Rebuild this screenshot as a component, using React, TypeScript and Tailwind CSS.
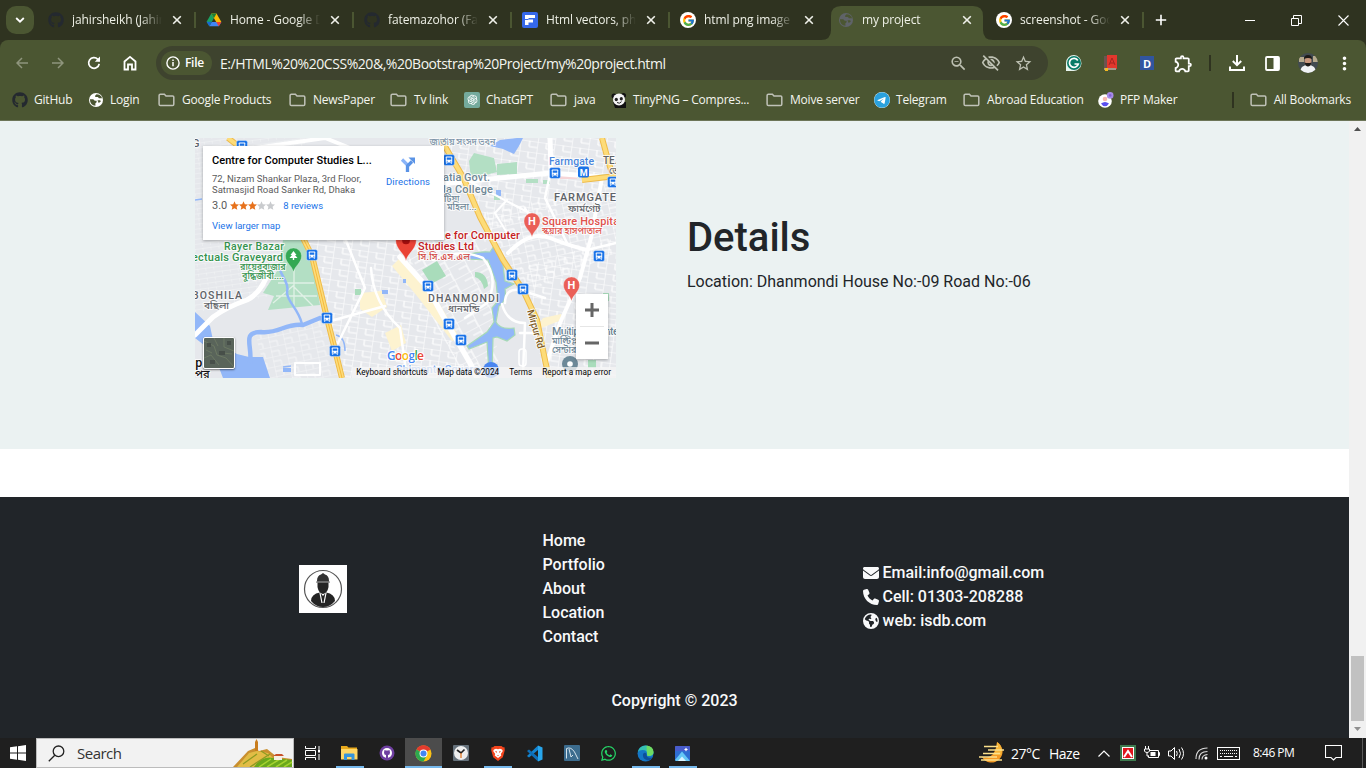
import React from "react";
import { FaGithub, FaEnvelope, FaPhone, FaEarthAmericas, FaTelegram, FaWhatsapp } from "react-icons/fa6";
import { FcGoogle } from "react-icons/fc";
import { AiOutlineOpenAI } from "react-icons/ai";
import { MdZoomOut, MdOutlineVisibilityOff, MdStarBorder, MdOutlineExtension, MdMoreVert } from "react-icons/md";

const UI = "font-['Open_Sans','Noto_Sans',sans-serif]";

/* ---------- small drawings ---------- */

const Close = () => (
  <svg width="10" height="10" viewBox="0 0 10 10" className="shrink-0">
    <path d="M1.2 1.2l7.6 7.6M8.8 1.2L1.2 8.8" stroke="#f0f1ea" strokeWidth="1.6" />
  </svg>
);

const Drive = () => (
  <svg width="16" height="16" viewBox="0 0 16 16">
    <path d="M5.3 1.5L8 6 3.3 14.2.6 9.8z" fill="#1aa260" />
    <path d="M5.3 1.5h5.2L15.4 10h-5.2z" fill="#fbbc04" />
    <path d="M5.3 1.5h5.2L8 6z" fill="#188038" />
    <path d="M3.3 14.2L5.8 9.9h9.6l-2.6 4.3z" fill="#4285f4" />
    <path d="M10.2 9.9h5.2l-2.6 4.3z" fill="#ea4335" />
    <path d="M.6 9.8h5.2l-2.5 4.4z" fill="#1967d2" />
  </svg>
);

const FIcon = () => (
  <svg width="16" height="16" viewBox="0 0 16 16">
    <rect width="16" height="16" rx="2" fill="#3568ea" />
    <path d="M3 3h10v3H6.5v1.5H11v3H6.5V13H3z" fill="#fff" />
    <path d="M3 7.5h3.500" stroke="#3568ea" />
  </svg>
);

const GoogleRound = () => (
  <div className="flex size-4 items-center justify-center rounded-full bg-white">
    <FcGoogle size={13} />
  </div>
);

const Globe = ({ color, bg }: { color: string; bg: string }) => (
  <svg width="16" height="16" viewBox="0 0 16 16">
    <circle cx="8" cy="8" r="7" fill={color} />
    <path d="M2 7.300h3.200l1.600 1.500h1.800v1.400l-1.200 1v2.600A6 6 0 0 1 2 8z" fill={bg} />
    <path d="M8.600 2.300l-1.400 1.200v1.400h2.700l1 1.400H14l-.6-1.700A6 6 0 0 0 8.600 2.300z" fill={bg} />
    <path d="M9.500 8.200h2.700l.6 1.400-2.100 1.500z" fill={bg} />
  </svg>
);

const Folder = () => (
  <svg width="17" height="14" viewBox="0 0 17 14">
    <path d="M2.400 1.200h4l1.600 1.700h6.600c.6 0 1.200.5 1.200 1.200v7.200c0 .7-.6 1.300-1.200 1.300H2.400c-.7 0-1.300-.6-1.300-1.300V2.500c0-.7.6-1.300 1.300-1.300z" fill="none" stroke="#c0c2b8" strokeWidth="1.5" />
  </svg>
);

const Panda = () => (
  <svg width="16" height="16" viewBox="0 0 16 16">
    <circle cx="3" cy="4" r="2.500" fill="#111" />
    <circle cx="12.500" cy="3.500" r="2.500" fill="#111" />
    <path d="M2 10h13v6H4z" fill="#111" />
    <ellipse cx="8" cy="7.500" rx="6" ry="6" fill="#f4f4f4" />
    <ellipse cx="5.300" cy="7.500" rx="1.600" ry="1.800" fill="#222" />
    <ellipse cx="10.300" cy="6.800" rx="1.600" ry="1.800" fill="#222" />
    <path d="M6 10.500q2.500 1.800 4.500-.8" stroke="#222" fill="none" />
  </svg>
);

const Pfp = () => (
  <svg width="16" height="16" viewBox="0 0 16 16">
    <circle cx="7" cy="9" r="6.800" fill="#fff" />
    <circle cx="7" cy="7" r="2.300" fill="#f7b7b0" />
    <path d="M3 11.500q4-3 8 0-1.500 2.700-4 2.700t-4-2.700z" fill="#5a4ff0" />
    <circle cx="12.200" cy="3.400" r="3.300" fill="#a78be8" />
    <circle cx="12.200" cy="3.400" r="1.300" fill="#8260d8" />
  </svg>
);

/* ---------- tabs ---------- */

type Tab = { icon: React.ReactNode; title: string; active?: boolean; sep?: boolean };
const tabs: Tab[] = [
  { icon: <FaGithub size={16} color="#24292f" />, title: "jahirsheikh (Jahir", sep: true },
  { icon: <Drive />, title: "Home - Google D", sep: true },
  { icon: <FaGithub size={16} color="#24292f" />, title: "fatemazohor (Fat", sep: true },
  { icon: <FIcon />, title: "Html vectors, pho", sep: true },
  { icon: <GoogleRound />, title: "html png image" },
  { icon: <Globe color="#5f6368" bg="#4b5632" />, title: "my project", active: true },
  { icon: <GoogleRound />, title: "screenshot - Goo", sep: true },
];

const TabStrip = () => (
  <div className="flex h-10 items-center bg-[#2f3320] pl-[6px]">
    <div className="mr-1 flex size-7 items-center justify-center rounded-[10px] bg-[#4b5632]">
      <svg width="10" height="6" viewBox="0 0 10 6"><path d="M1.200 1L5 4.700 8.800 1" fill="none" stroke="#fff" strokeWidth="1.800" /></svg>
    </div>
    {tabs.map((t, i) => (
      <div key={i} className="relative flex h-10 w-[158px] shrink-0 items-center pl-[10px]">
        {t.active && (
          <svg width="172" height="34" viewBox="0 0 172 34" className="absolute top-[6px] left-[-7px]">
            <path d="M0 34Q10 34 10 24V10Q10 0 20 0H152Q162 0 162 10V24Q162 34 172 34z" fill="#4b5632" />
          </svg>
        )}
        <div className="relative flex size-4 shrink-0 items-center justify-center">{t.icon}</div>
        <div className="relative ml-2 w-[90px] overflow-hidden text-[12px] tracking-[-0.1px] whitespace-nowrap text-[#eef0e6] [mask-image:linear-gradient(to_right,#000_76%,transparent)]">{t.title}</div>
        <div className="relative ml-[10px] flex"><Close /></div>
        {t.sep && <div className="ml-auto h-4 w-[2px] shrink-0 bg-[#4b5632]" />}
      </div>
    ))}
    <svg width="12" height="12" viewBox="0 0 12 12" className="ml-[11px]"><path d="M6 .8v10.400M.8 6h10.400" stroke="#fff" strokeWidth="1.600" /></svg>
    <div className="ml-auto flex items-center gap-9 pr-[17px]">
      <svg width="10" height="10"><path d="M0 5.500h10" stroke="#fff" /></svg>
      <svg width="11" height="11"><path d="M.5 3.500h7v7h-7zM2.500 3.500v-3h8v8h-3" stroke="#fff" fill="none" /></svg>
      <svg width="11" height="11"><path d="M.5 .5l10 10M10.500 .5l-10 10" stroke="#fff" strokeWidth="1.100" /></svg>
    </div>
  </div>
);

const Arrow = ({ flip }: { flip?: boolean }) => (
  <svg width="12" height="12" viewBox="0 0 12 12" className={flip ? "rotate-180" : ""}>
    <path d="M12 6H1M6 1L1 6l5 5" fill="none" stroke="#8f957d" strokeWidth="1.500" />
  </svg>
);

const Toolbar = () => (
  <div className="bg-[#2f3320]">
    <div className="flex h-[46px] items-center rounded-t-[8px] bg-[#4b5632]">
      <div className="ml-4 flex w-[140px] items-center">
        <Arrow />
        <div className="ml-[24px]"><Arrow flip /></div>
        <svg width="14" height="14" viewBox="0 0 14 14" className="ml-[23px]">
          <path d="M12.200 7.800A5.300 5.300 0 1 1 10.800 3.300L12.500 5" fill="none" stroke="#fff" strokeWidth="1.700" />
          <path d="M13 .6v5.200H7.800z" fill="#fff" />
        </svg>
        <svg width="14" height="16" viewBox="0 0 14 16" className="ml-[22px]">
          <path d="M1.500 14.500v-8L7 1.900l5.500 4.600v8H9v-5H5v5z" fill="none" stroke="#fff" strokeWidth="1.800" />
        </svg>
      </div>
      <div className="flex h-[34px] w-[892px] items-center rounded-full bg-[#3e432e] pr-[15px] pl-[5px]">
        <div className="flex h-6 w-[51px] items-center gap-[5px] rounded-full bg-[#4b5632] pl-[5px]">
          <svg width="14" height="14" viewBox="0 0 14 14" className="shrink-0"><circle cx="7" cy="7" r="6.100" fill="none" stroke="#fff" strokeWidth="1.400" /><path d="M7 6v4.300M7 3.500v1.500" stroke="#fff" strokeWidth="1.500" /></svg>
          <span className="text-[12px] font-semibold tracking-[-0.3px] text-white">File</span>
        </div>
        <span className="ml-2 text-[14px] tracking-[-0.45px] whitespace-nowrap text-[#f5f6f0]">E:/HTML%20%20CSS%20&amp;,%20Bootstrap%20Project/my%20project.html</span>
        <div className="ml-auto flex items-center gap-[13px] text-[#bdc0b2]">
          <MdZoomOut size={19} />
          <MdOutlineVisibilityOff size={20} />
          <MdStarBorder size={19} />
        </div>
      </div>
      <div className="ml-[17px] flex items-center">
        <svg width="18" height="18" viewBox="0 0 18 18"><path d="M9 1a8 8 0 1 1-1 16H1V9a8 8 0 0 1 8-8z" fill="#e8f5ef" /><circle cx="9" cy="9" r="7" fill="#087b67" /><path d="M12.800 6.500A4.500 4.500 0 1 0 13.300 10H9.500" fill="none" stroke="#fff" strokeWidth="1.700" /></svg>
        <svg width="15" height="18" viewBox="0 0 15 18" className="ml-5"><path d="M1 2h3v13H1z" fill="#6c5350" /><path d="M4 1h10v14H4z" fill="#e2372d" /><path d="M6 11l3-7 3 7M7 9h4" stroke="#a72420" fill="none" /><path d="M1 14h12v2H1z" fill="#a49689" /><path d="M2 14h3v3H2z" fill="#f5b921" /></svg>
        <div className="ml-[22px] flex size-[14px] items-center justify-center bg-[#31559f] text-[11px] leading-none font-bold text-white">D</div>
        <MdOutlineExtension size={21} color="#fff" className="ml-[19px]" />
        <div className="ml-[15px] h-4 w-[2px] bg-[#2f3320]" />
        <svg width="16" height="16" viewBox="0 0 16 16" className="ml-[18px]"><path d="M8 0v10M3.800 6L8 10.200 12.200 6" fill="none" stroke="#fff" strokeWidth="2" /><path d="M1 11.500V15h14v-3.500" fill="none" stroke="#fff" strokeWidth="2" /></svg>
        <svg width="15" height="15" viewBox="0 0 15 15" className="ml-5"><rect x="1" y="1" width="13" height="13" rx="1" fill="none" stroke="#fff" strokeWidth="1.800" /><path d="M8.500 1H14v13H8.500z" fill="#fff" /></svg>
        <svg width="20" height="20" viewBox="0 0 20 20" className="ml-[18px]">
          <clipPath id="av"><circle cx="10" cy="10" r="10" /></clipPath>
          <g clipPath="url(#av)"><rect width="20" height="20" fill="#424b51" /><path d="M1 4h5v5H1zM15 3h5v6h-5z" fill="#b5aa8e" /><path d="M2 20q0-8 8-8t8 8z" fill="#f1f3f5" /><ellipse cx="10" cy="8" rx="3.500" ry="4.500" fill="#c7967c" /><path d="M6 6q0-4 4-4t4 4q-4-2-8 0z" fill="#1d1a18" /><path d="M6.500 9.500q3.500 1 7 0-1 4-3.500 4t-3.500-4z" fill="#1d1a18" /></g>
        </svg>
        <MdMoreVert size={21} color="#fff" className="ml-[16px]" />
      </div>
    </div>
  </div>
);

const bookmarks: { icon: React.ReactNode; label: string; w: string; gap?: string }[] = [
  { icon: <FaGithub size={16} color="#24292f" />, label: "GitHub", w: "w-[76px]", gap: "ml-[6px]" },
  { icon: <Globe color="#fff" bg="#4b5632" />, label: "Login", w: "w-[70px]", gap: "ml-[6px]" },
  { icon: <Folder />, label: "Google Products", w: "w-[131px]" },
  { icon: <Folder />, label: "NewsPaper", w: "w-[101px]" },
  { icon: <Folder />, label: "Tv link", w: "w-[74px]" },
  { icon: <div className="flex size-4 items-center justify-center rounded-[2px] bg-[#74aa9c]"><AiOutlineOpenAI size={13} color="#fff" /></div>, label: "ChatGPT", w: "w-[86px]", gap: "ml-[6px]" },
  { icon: <Folder />, label: "java", w: "w-[61px]" },
  { icon: <Panda />, label: "TinyPNG – Compres...", w: "w-[155px]", gap: "ml-[6px]" },
  { icon: <Folder />, label: "Moive server", w: "w-[108px]" },
  { icon: <div className="flex size-4 items-center justify-center rounded-full bg-white"><FaTelegram size={16} color="#2aa1de" /></div>, label: "Telegram", w: "w-[89px]", gap: "ml-[6px]" },
  { icon: <Folder />, label: "Abroad Education", w: "w-[135px]" },
  { icon: <Pfp />, label: "PFP Maker", w: "w-[100px]", gap: "ml-[6px]" },
];

const Bookmarks = () => (
  <div className="flex h-[35px] items-center border-b border-[#6c7558] bg-[#4b5632] pb-[7px] pl-3 text-[12px] tracking-[-0.2px] whitespace-nowrap text-[#f4f5ef]">
    {bookmarks.map((b) => (
      <div key={b.label} className={`flex shrink-0 items-center ${b.w}`}>
        <div className="flex shrink-0">{b.icon}</div>
        <span className={b.gap ?? "ml-[7px]"}>{b.label}</span>
      </div>
    ))}
    <div className="ml-auto flex items-center pr-[15px]">
      <div className="mr-4 h-4 w-[2px] bg-[#2f3320]" />
      <Folder />
      <span className="ml-[7px]">All Bookmarks</span>
    </div>
  </div>
);

/* ---------- map ---------- */

const stops: [number, number][] = [
  [47, 8], [117, 117], [254, 22], [360, 35], [418, 44], [404, 118], [233, 148], [317, 137], [328, 151],
  [254, 186], [266, 202], [132, 180], [140, 213],
];

const Bus = ({ x, y }: { x: number; y: number }) => (
  <g transform={`translate(${x - 5.500} ${y - 5.500})`}>
    <rect width="11" height="11" rx="1.800" fill="#1a73e8" stroke="#fff" strokeOpacity=".6" strokeWidth=".6" />
    <path d="M3 2h5q.7 0 .7.700v5.300H2.300V2.700Q2.300 2 3 2z" fill="#fff" />
    <path d="M3.200 3h4.600v2.300H3.200zM3.200 6.300h1v1h-1zM6.800 6.300h1v1h-1z" fill="#1a73e8" />
    <path d="M3.200 8v1.300M7.800 8v1.300" stroke="#fff" />
  </g>
);

const Pin = ({ x, y, s, fill, children }: { x: number; y: number; s: number; fill: string; children?: React.ReactNode }) => (
  <g transform={`translate(${x} ${y}) scale(${s})`}>
    <path d="M0 0C-1-6-8-9-8-16A8 8 0 0 1 8-16C8-9 1-6 0 0z" fill={fill} stroke="#fff" strokeOpacity=".5" strokeWidth=".5" />
    {children}
  </g>
);

const Halo = ({ x, y, size, fill, children, w, ls, weight = 500 }: { x: number; y: number; size: number; fill: string; children: string; w?: number; ls?: number; weight?: number }) => (
  <text x={x} y={y} fontSize={size} fill={fill} fontWeight={weight} letterSpacing={ls} textLength={w} stroke="#fff" strokeWidth="2" strokeOpacity=".8" paintOrder="stroke" strokeLinejoin="round">{children}</text>
);

const MapArt = () => (
  <svg width="421" height="240" viewBox="0 0 421 240" className="block font-[Roboto,'Noto_Sans_Bengali',sans-serif]">
    <defs>
      <pattern id="g1" width="15" height="10" patternUnits="userSpaceOnUse" patternTransform="rotate(-12)">
        <path d="M0 0H15M0 0V10M8 5V10M0 5H8" stroke="#fff" strokeWidth="1" fill="none" />
      </pattern>
      <pattern id="g2" width="17" height="11" patternUnits="userSpaceOnUse" patternTransform="rotate(8)">
        <path d="M0 0H17M0 0V11M9 0V6M9 6H17" stroke="#fff" strokeWidth="1.200" fill="none" />
      </pattern>
      <pattern id="g3" width="18" height="13" patternUnits="userSpaceOnUse" patternTransform="rotate(-28)">
        <path d="M0 0H18M0 0V13M9 6H18V13" stroke="#fff" strokeWidth="1.200" fill="none" />
      </pattern>
      <pattern id="g4" width="8" height="5" patternUnits="userSpaceOnUse" patternTransform="rotate(-8)">
        <path d="M0 0H8M0 0V3" stroke="#f6f7f8" strokeWidth=".8" fill="none" />
      </pattern>
    </defs>
    <rect width="421" height="240" fill="#e6e8ec" />
    <path d="M0 0H110L112 150 0 175z" fill="url(#g4)" />
    <path d="M60 195L128 182 146 240H72z" fill="url(#g1)" opacity=".6" />
    <path d="M108 90L205 100 275 240H148z" fill="url(#g2)" />
    <path d="M200 90L290 95 305 240H270L205 119z" fill="url(#g3)" />
    <path d="M245 0H421V45L290 95z" fill="url(#g2)" />
    <path d="M285 75L421 45V115L330 155z" fill="url(#g1)" />
    <path d="M325 130L421 100V240H350z" fill="url(#g2)" />

    <path d="M165 155l22-2 5 16-15 10-12-8zM190 195l16-8 5 18-14 8zM205 120l30 30 30 50-8 3-35-45-25-30z" fill="#fdf3d0" />
    <path d="M348 180l18-4 3 5-30 12z" fill="#fdf3d0" />
    <path d="M88 102H107L117 120 125 167 73 172 79 158 68 155 84 130z" fill="#b3dfc4" />
    <path d="M83 145H119M81 158H122M99 125V168M78 165L98 148 118 168" stroke="#e0f1e6" strokeWidth="1.300" fill="none" />
    <path d="M279 15l20 5 3 14-26 7-2-18zM302 26l20-2v12l-20 1zM331 41h12v4h-12zM348 42h7v4h-7zM299 57h6v5h-6zM380 36h32v4h-34z" fill="#b3dfc4" />
    <path d="M365 37h17v4h-17z" fill="#f6d5d7" />
    <path d="M227 132l15-9 9 15-15 8zM280 134q12 0 13 14l-4 3q-2-10-9-12zM160 151h6v6h-6zM408 155h6v8h-6zM393 222h8v8h-8z" fill="#a9dcbb" />

    <path d="M0 174l15 14 3 14 24 14 12 3 14 0 7 21H28L18 214 0 200z" fill="#92b7f8" />
    <path d="M55 225C58 208 46 194 66 194 84 196 90 185 108 187L125 180 132 181" fill="none" stroke="#92b7f8" strokeWidth="4.500" />
    <path d="M107 186C103 170 93 165 92 155 94 146 89 142 85 132" fill="none" stroke="#92b7f8" strokeWidth="2.500" />
    <path d="M0 62l7-1M141 197q9 2 9 16M88 229l8-1" fill="none" stroke="#92b7f8" strokeWidth="1.500" />
    <path d="M88 230h8v4h-8zM301 52h5v6h-5zM187 152h6v4h-6zM208 141h3v4h-3z" fill="#92b7f8" />
    <path d="M270 118q12-5 25-4l4-6q8 2 8 12l3 23 9 3-9 5q2 12-6 17l-3 16q4 8 18 6l1 7-8 6-10-4-4 1-1 36-3-2-2-30-18 7-2-3 20-14 7-10-2-14 6-7-2-19-8-22-23-1z" fill="#92b7f8" stroke="#a6d9b6" strokeWidth="1.200" />
    <path d="M295 8l10-6 17-2 6 0-4 8-5 8-11-5z" fill="#92b7f8" />

    <g fill="none" stroke="#fff" strokeLinecap="round" strokeLinejoin="round">
      <path d="M0 197L18 179Q32 169 52 162 68 154 75 129" strokeWidth="5" />
      <path d="M60 10L130 0M130 0l50 20" strokeWidth="4" />
      <path d="M205 119L232 149 252 185 275 225 282 240" strokeWidth="5.500" />
      <path d="M246 46L355 35 421 40M355 0L356 35" strokeWidth="5" />
      <path d="M313 115Q335 92 355 100T392 112" strokeWidth="4" />
      <path d="M407 40L396 100 385 140 365 185 352 224" strokeWidth="4" />
      <path d="M392 112L421 105M355 36L350 60 372 105M132 184L190 168M143 205L170 150 150 100M176 130Q178 165 205 190L212 240" strokeWidth="2.500" />
      <path d="M238 122Q265 110 288 120 305 140 292 165L270 180M310 165Q310 150 325 152L350 160M307 166Q312 185 330 185L328 235M325 195H345" strokeWidth="2.500" />
      <path d="M312 62L300 75 312 95M268 40L340 78M330 70L342 90" strokeWidth="2" />
      <path d="M100 225h25v12h-25z" strokeWidth="2" />
      <rect x="324" y="211" width="7" height="17" rx="3" strokeWidth="1.500" />
    </g>
    <g fill="none" strokeLinejoin="round">
      <path d="M33 0L47 11M108 100L117 118 132 180 140 212 147 240M245 0L268 39 285 79 308 122 328 152 342 182 350 222 354 240M407 0L413 22 418 39 421 47M387 42L421 38" stroke="#eebb4b" strokeWidth="6" />
      <path d="M33 0L47 11M108 100L117 118 132 180 140 212 147 240M245 0L268 39 285 79 308 122 328 152 342 182 350 222 354 240M407 0L413 22 418 39 421 47M387 42L421 38" stroke="#fddc79" strokeWidth="4" />
      <path d="M108 100L117 118 132 180 140 212 147 240" stroke="#f5b83d" strokeWidth="1" />
    </g>

    {stops.map(([x, y]) => <Bus key={`${x}-${y}`} x={x} y={y} />)}
    <rect x="383" y="28.500" width="11" height="11" rx="1.800" fill="#1a73e8" />
    <text x="384.800" y="37.500" fontSize="9" fontWeight="700" fill="#fff">M</text>

    <Halo x={-3} y={9} size={11} fill="#5f6368">G</Halo>
    <Halo x={234} y={7} size={9.500} fill="#7d95a8" w={66}>জাতীয় সংসদ ভবন</Halo>
    <Halo x={354} y={27} size={10.500} fill="#4a86dc" w={45}>Farmgate</Halo>
    <Halo x={408} y={26} size={10} fill="#5f6368">TE.</Halo>
    <Halo x={414} y={36} size={9} fill="#5f6368">তে</Halo>
    <Halo x={248} y={43} size={11} fill="#6f8796" w={47}>atia Govt.</Halo>
    <Halo x={248} y={55} size={11} fill="#6f8796" w={50}>la College</Halo>
    <Halo x={249} y={64} size={9} fill="#6f8796">টিয়া</Halo>
    <Halo x={252} y={72} size={9} fill="#6f8796">মহিলা...</Halo>
    <Halo x={359} y={63} size={11} fill="#5f6368" w={62}>FARMGATE</Halo>
    <Halo x={373} y={74} size={10} fill="#5f6368">ফার্মগেট</Halo>
    <Halo x={347} y={87} size={11} fill="#e0524c" w={80}>Square Hospital</Halo>
    <Halo x={347} y={96} size={9} fill="#e0524c">স্কয়ার হাসপাতাল</Halo>
    <Halo x={250} y={101} size={11} fill="#c5221f" w={75}>e for Computer</Halo>
    <Halo x={223} y={112} size={11} fill="#c5221f" w={56}>Studies Ltd</Halo>
    <Halo x={223} y={122} size={9} fill="#d34a47" w={52}>সি.সি.এস.এল</Halo>
    <Halo x={29} y={112} size={10.500} fill="#34934e" w={60}>Rayer Bazar</Halo>
    <Halo x={-3} y={123} size={11} fill="#34934e" w={91}>ectuals Graveyard</Halo>
    <Halo x={45} y={132} size={9} fill="#34934e">রায়েরবাজার</Halo>
    <Halo x={47} y={141} size={9} fill="#34934e">বুদ্ধিজীবী....</Halo>
    <Halo x={-3} y={161} size={10.500} fill="#5f6368" w={50}>BOSHILA</Halo>
    <Halo x={9} y={171} size={10} fill="#5f6368">বছিলা</Halo>
    <Halo x={233} y={164} size={10.500} fill="#5f6368" w={71}>DHANMONDI</Halo>
    <Halo x={253} y={174} size={10} fill="#5f6368">ধানমন্ডি</Halo>
    <g transform="rotate(74 335 172)"><Halo x={335} y={175} size={10} fill="#7c5a24" w={40}>Mirpur Rd</Halo></g>
    <Halo x={357} y={197} size={11} fill="#6a8494" w={70}>Multiplan Center</Halo>
    <Halo x={357} y={206} size={9} fill="#6a8494">মাল্টিপ্লান</Halo>
    <Halo x={357} y={215} size={9} fill="#6a8494">সেন্টার</Halo>
    <Halo x={201} y={235} size={11} fill="#7ea9ee" w={83}>Shimanto Square</Halo>
    <Halo x={-3} y={229} size={12.500} fill="#111">ıp</Halo>
    <Halo x={0} y={240} size={11} fill="#111">পর</Halo>

    <Pin x={98.500} y={134} s={1} fill="#34a853"><path d="M0-21l3 4H1.500l2.500 3H-4l2.500-3H-3zM-.700-14h1.400v2H-.7z" fill="#fff" /></Pin>
    <Pin x={337} y={99} s={1} fill="#ea5f57"><text x="-4" y="-12" fontSize="11" fontWeight="700" fill="#fff">H</text></Pin>
    <Pin x={376.500} y={163} s={1} fill="#ea5f57"><text x="-4" y="-12" fontSize="11" fontWeight="700" fill="#fff">H</text></Pin>
    <Pin x={211} y={123} s={1.280} fill="#ea4335"><circle cy="-16" r="3" fill="#a50e0e" /></Pin>
    <circle cx="375" cy="226" r="8" fill="#6d8998" /><circle cx="375" cy="226" r="2.800" fill="#fff" />
    <circle cx="296" cy="232" r="8" fill="#4a86f0" />
  </svg>
);

const Star = ({ on }: { on: boolean }) => (
  <svg width="9" height="9" viewBox="0 0 24 24"><path d="M12 .5l3.500 8 8.500.8-6.500 5.700 2 8.500L12 19l-7.500 4.500 2-8.500L0 9.300l8.500-.8z" fill={on ? "#e7711b" : "#c9cbce"} /></svg>
);

const GoogleMap = () => (
  <div className="relative h-[240px] w-[421px] overflow-hidden font-[Roboto,sans-serif]">
    <MapArt />
    <div className="absolute top-2 left-2 flex h-[94px] w-[241px] bg-white pl-[9px] shadow-[0_1px_3px_rgba(0,0,0,0.3)]">
      <div className="w-[172px] shrink-0 whitespace-nowrap">
        <div className="mt-[8px] text-[11px] leading-[14px] font-medium tracking-[0.05px] text-black">Centre for Computer Studies L...</div>
        <div className="mt-[5px] text-[9.500px] leading-[11px] tracking-[0.03px] text-[#5b5b5b]">72, Nizam Shankar Plaza, 3rd Floor,<br />Satmasjid Road Sanker Rd, Dhaka</div>
        <div className="mt-[4px] flex items-center leading-[13px]">
          <span className="mr-[3px] text-[11px] text-[#5b5b5b]">3.0</span>
          {[1, 2, 3, 4, 5].map((n) => <Star key={n} on={n <= 3} />)}
          <span className="ml-2 text-[9.500px] text-[#1a73e8]">8 reviews</span>
        </div>
        <div className="mt-[8px] text-[9.500px] leading-[12px] text-[#1a73e8]">View larger map</div>
      </div>
      <div className="flex w-[48px] flex-col items-center">
        <svg width="16" height="17" viewBox="0 0 16 17" className="mt-[10px]">
          <path d="M2 3.500l5.500 5.500M7.500 16V9.500" stroke="#8ab4f8" strokeWidth="3.200" fill="none" />
          <path d="M7.500 16V10L12 5.500" stroke="#5a93e6" strokeWidth="3.200" fill="none" /><path d="M8.500 1.500H15V8z" fill="#5a93e6" />
        </svg>
        <span className="mt-[2px] text-[9.500px] leading-[14px] tracking-[0.15px] text-[#1a73e8]">Directions</span>
      </div>
    </div>
    <div className="absolute top-[156px] left-[381px] flex h-[65px] w-8 flex-col items-center bg-white shadow-[0_1px_3px_rgba(0,0,0,0.3)]">
      <svg width="14" height="65" viewBox="0 0 14 65"><path d="M0 16h14M7 9v14M0 49h14" stroke="#666" strokeWidth="3" /></svg>
      <div className="absolute top-8 left-1 h-px w-6 bg-[#e6e6e6]" />
    </div>
    <div className="absolute top-[199px] left-2 size-8 rounded-[2px] border border-white bg-[#59645a] shadow-[0_1px_2px_rgba(0,0,0,0.5)]">
      <svg width="30" height="30"><path d="M0 3l10 5 3 9 9 3 8 9M20 0v9l10 4M0 20l7-3 8 10M10 0l4 8M2 12l6 3M19 15l9 1" stroke="#748066" fill="none" opacity=".7" /><path d="M3 5h4v4H3zM15 13h6v4h-6zM6 22h5v4H6zM23 3h4v4h-4z" fill="#474f49" /></svg>
    </div>
    <svg width="40" height="17" viewBox="0 0 40 17" className="absolute top-[209px] left-[191px] font-['Open_Sans',sans-serif]">
      <text x="1" y="13" fontSize="12" fontWeight="600" stroke="#fff" strokeWidth="2" paintOrder="stroke" textLength="37"><tspan fill="#4285f4">G</tspan><tspan fill="#ea4335">o</tspan><tspan fill="#fbbc04">o</tspan><tspan fill="#4285f4">g</tspan><tspan fill="#34a853">l</tspan><tspan fill="#ea4335">e</tspan></text>
    </svg>
    <div className="absolute right-0 bottom-0 flex h-[11px] items-center gap-[10px] bg-[#f5f5f5]/75 pr-[5px] pl-[4px] text-[8.200px] leading-[11px] tracking-[0.02px] whitespace-nowrap text-black">
      <span>Keyboard shortcuts</span><span>Map data ©2024</span><span>Terms</span><span>Report a map error</span>
    </div>
  </div>
);

/* ---------- page ---------- */

const Footer = () => (
  <footer className="flex h-[241px] flex-col bg-[#212529] font-[Roboto,sans-serif] text-[16px] leading-6 font-medium text-[#f8f9fa]">
    <div className="flex h-[168px] items-center pt-[15px] pl-[299px]">
      <svg width="48" height="48" viewBox="0 0 48 48" className="shrink-0">
        <rect width="48" height="48" fill="#fff" />
        <circle cx="24" cy="24" r="18.500" fill="none" stroke="#555" strokeWidth="1.200" />
        <path d="M12 36Q12 29 21 27.500L24 31l3-3.500Q36 29 36 36 31 42 24 42T12 36z" fill="#242424" />
        <path d="M18.500 16h11v6q-1 6-5.500 7-4.500-1-5.500-7z" fill="#242424" />
        <path d="M18 16q0-5.500 4-6.500L24 8l2 1.500q4 1 4 6.500l1 1.500H17z" fill="#333" />
        <path d="M18 17h12" stroke="#aaa" /><path d="M21 28l2 10M27 28l-2 10" stroke="#fff" strokeWidth="1.200" />
      </svg>
      <div className="ml-[195.500px] w-[320px] shrink-0 tracking-[-0.02px]">
        {["Home", "Portfolio", "About", "Location", "Contact"].map((l) => <div key={l}>{l}</div>)}
      </div>
      <div className="mt-4">
        <div className="flex items-center gap-1"><FaEnvelope size={16} />Email:info@gmail.com</div>
        <div className="flex items-center gap-1"><FaPhone size={16} />Cell: 01303-208288</div>
        <div className="flex items-center gap-1"><FaEarthAmericas size={16} />web: isdb.com</div>
      </div>
    </div>
    <div className="mt-6 text-center">Copyright © 2023</div>
  </footer>
);

const Page = () => (
  <div className="flex h-[617px]">
    <main className="w-[1349px]">
      <section className="flex h-[328px] bg-[#ebf2f2] pt-[17px] pl-[195px]">
        <GoogleMap />
        <div className="ml-[71px] pt-[76px] font-[Roboto,sans-serif] text-[#212529]">
          <h1 className="text-[40px] leading-[48px] font-medium">Details</h1>
          <p className="mt-2 text-[16px] leading-6">Location: Dhanmondi House No:-09 Road No:-06</p>
        </div>
      </section>
      <div className="h-12 bg-white" />
      <Footer />
    </main>
    <div className="flex w-[17px] flex-col items-center bg-[#f1f1f1] py-[6px]">
      <svg width="7" height="4"><path d="M0 4L3.500 0 7 4z" fill="#505050" /></svg>
      <div className="mt-[525px] h-[65px] w-[13px] bg-[#c1c1c1]" />
      <svg width="7" height="4" className="mt-[6px]"><path d="M0 0L3.500 4 7 0z" fill="#909090" /></svg>
    </div>
  </div>
);

/* ---------- taskbar ---------- */

const apps: { name: string; icon: React.ReactNode; open?: boolean; focus?: boolean }[] = [
  { name: "taskview", icon: <svg width="16" height="16" viewBox="0 0 16 16"><path d="M.5 1v2.500h10V1M.5 15v-2.500h10V15M.5 5.500h10v5H.5zM14 1v3M14 9v6" fill="none" stroke="#fff" /><path d="M13 4.500h2v3h-2z" fill="#fff" /></svg> },
  { name: "explorer", open: true, icon: <svg width="17" height="15" viewBox="0 0 17 15"><path d="M0 0h6l1.500 1.500H16V13H0z" fill="#e8a91c" /><path d="M0 3h16.500v10.500H0z" fill="#ffd766" /><path d="M3 14V8.500Q3 7.500 4 7.500h8.500q1 0 1 1V14h-3v-3H6v3z" fill="#3695db" /></svg> },
  { name: "github", icon: <svg width="16" height="16" viewBox="0 0 16 16"><circle cx="8" cy="8" r="7.500" fill="#6e3fa0" /><circle cx="8" cy="8" r="5" fill="#fff" /><path d="M5.500 5l1.500.600h2L10.500 5l.5 2.500q0 2.500-2 2.500v3H7v-3q-2 0-2-2.500z" fill="#6e3fa0" /></svg> },
  { name: "chrome", open: true, focus: true, icon: <svg width="17" height="17" viewBox="0 0 18 18"><circle cx="9" cy="9" r="8.500" fill="#fbc116" /><path d="M9 9L1.600 4.700A8.500 8.500 0 0 1 16.400 4.700z" fill="#e33b2e" /><path d="M9 9L1.600 4.700A8.500 8.500 0 0 0 9 17.500L12.500 11z" fill="#2da94f" /><circle cx="9" cy="9" r="4.200" fill="#fff" /><circle cx="9" cy="9" r="3.200" fill="#4285f4" /></svg> },
  { name: "clock", icon: <svg width="16" height="16" viewBox="0 0 16 16"><rect width="16" height="16" rx="1" fill="#65717b" /><circle cx="8" cy="8" r="7" fill="#eee" /><path d="M4 5l4 3 3.500-3.500" stroke="#222" strokeWidth="1.700" fill="none" /><path d="M8 8v5" stroke="#e37a28" strokeWidth="1.300" /></svg> },
  { name: "brave", open: true, icon: <svg width="14" height="17" viewBox="0 0 14 17"><path d="M3.500 1h7l1.500 1.300 1.500-.1.300 3-2 7L7 16l-4.800-3.800-2-7 .3-3L2 2.300z" fill="#f2441d" /><path d="M3 4.500l2-.700L7 4.200l2-.400 2 .700.800 1.500-2 3 .5 1.500L7 13l-3.300-2.500.5-1.500-2-3z" fill="#fff" /><path d="M4 6l2 .5L5.500 8zM10 6l-2 .500.500 1.500zM6 10h2l-1 1z" fill="#f2441d" /></svg> },
  { name: "vscode", icon: <svg width="17" height="17" viewBox="0 0 17 17"><path d="M12 .5l4.500 2v12l-4.500 2z" fill="#28a6ec" /><path d="M12 .5V5L3 12.500 1 11z" fill="#1384d0" /><path d="M12 16.500V12L3 4.500 1 6z" fill="#0e6fb8" /></svg> },
  { name: "mysql", icon: <svg width="16" height="16" viewBox="0 0 16 16"><rect width="16" height="16" rx="1" fill="#3c6c8e" /><path d="M2.500 13.500V3.500Q7 1.500 10.500 7L14 14M5 4l1 4 1 4 2-2" fill="none" stroke="#d5e3ec" /></svg> },
  { name: "whatsapp", icon: <FaWhatsapp size={17} color="#25d366" /> },
  { name: "edge", open: true, icon: <svg width="17" height="17" viewBox="0 0 17 17"><circle cx="8.500" cy="8.500" r="8" fill="#1476c6" /><path d="M.8 7Q2.500 .5 8.500.5t8 6.500q0 4-5 4-2 0-1.500-2 .5-4-4.500-4Q2 5 .8 7z" fill="#35c1b1" /><path d="M9.500 .600q7 .900 7 6.400 0 4-5 4-2 0-1.500-2z" fill="#6fdc63" /><path d="M6 9q-1 5 5 6.500 3-.5 4.500-3-6 1.500-6-3.500Q8 6.500 6 9z" fill="#0d4f9c" /></svg> },
  { name: "photos", open: true, icon: <svg width="15" height="15" viewBox="0 0 15 15"><rect width="15" height="15" rx="1.200" fill="#2f6dd2" /><path d="M0 0h15v5H0z" fill="#5a52c6" opacity=".6" /><path d="M0 14L7 5.500 15 15H1z" fill="#65c7f6" /><path d="M3 15l4-4.500 4 4.500z" fill="#d9f3ff" /><path d="M11 1.500l.7 1.300 1.300.7-1.300.7-.7 1.300-.7-1.300L9 3.500l1.300-.7z" fill="#fff" /></svg> },
];

const Hill = () => (
  <svg width="60" height="28" viewBox="0 0 60 28">
    <path d="M0 28L15 12l7-3 4 3 8-2 10 8 15 2v8z" fill="#c98f2f" />
    <path d="M4 28L16 14l8-2 11 2 6 6-8 8z" fill="#e2bc45" />
    <path d="M21 28q8-12 20-9l18 2v7z" fill="#6aa81c" />
    <path d="M17 28l20-13M10 25l14-10M28 12l8 5" stroke="#8d9b22" strokeWidth="1.300" />
    <path d="M26 28l12-8M34 28l13-8M43 28l11-7M51 28l8-5" stroke="#a4d32f" strokeWidth="1.500" />
    <path d="M22 12V3l1.500-3L25 3v9z" fill="#c97d1e" />
    <path d="M41 17h8v4h-8z" fill="#f4efe2" /><path d="M40 17l3-2h6l2 2z" fill="#c8512a" />
  </svg>
);

const Taskbar = () => (
  <div className="flex h-[30px] items-center bg-[#1f1f1f] text-white">
    <div className="flex w-9 justify-center">
      <svg width="16" height="16" viewBox="0 0 16 16"><path d="M0 2.300L7 1.300V7.600H0zM8 1.200L16 0v7.600H8zM0 8.500h7v6.200l-7-1zM8 8.500h8V16l-8-1.200z" fill="#fff" /></svg>
    </div>
    <div className="flex h-[30px] w-[258px] items-center border border-[#bcbcbc] bg-[#f2f2f2] pl-[11px] text-[#333]">
      <svg width="17" height="17" viewBox="0 0 17 17"><circle cx="10.500" cy="6.300" r="5.300" fill="none" stroke="#222" strokeWidth="1.300" /><path d="M6.800 10.200L.8 16.300" stroke="#222" strokeWidth="1.300" /></svg>
      <span className="ml-3 text-[15px] tracking-[-0.5px]">Search</span>
      <div className="ml-auto"><Hill /></div>
    </div>
    {apps.map((a) => (
      <div key={a.name} className={`flex h-[30px] w-[37px] flex-col items-center ${a.focus ? "bg-[#4c4c4c]" : ""}`}>
        <div className="flex h-7 items-center pt-[2px]">{a.icon}</div>
        {a.open && <div className={`h-[2px] bg-[#76b9ed] ${a.focus ? "w-full" : "w-7"}`} />}
      </div>
    ))}
    <div className="ml-auto flex items-center">
      <svg width="25" height="24" viewBox="0 0 25 24"><path d="M18 1a11 11 0 1 1-15 15q13 3 15-15z" fill="#f49a24" /><path d="M18 1a11 11 0 0 1 4 13l-8 0q4-5 4-13z" fill="#f7b63a" /><path d="M5 5.500h14M9 9h16M4 12.500h17M0 16h18M2 19h21" stroke="#fbe08a" strokeWidth="1.600" /></svg>
      <span className="ml-[7px] w-[38px] text-[14px] tracking-[-0.5px]">27°C</span>
      <span className="w-[49px] text-[14px] tracking-[-0.5px]">Haze</span>
      <svg width="12" height="7" viewBox="0 0 12 7"><path d="M.5 6.500L6 1l5.500 5.500" stroke="#fff" fill="none" strokeWidth="1.200" /></svg>
      <svg width="16" height="16" viewBox="0 0 16 16" className="ml-[10px]"><rect width="16" height="16" fill="#3d7a4e" /><rect x="2" y="2" width="12" height="12" fill="#fff" /><rect x="3" y="3" width="10" height="10" fill="#e0161d" /><path d="M4 12l4-6 4 6" stroke="#fff" strokeWidth="2" fill="none" /></svg>
      <svg width="16" height="14" viewBox="0 0 16 14" className="ml-2"><path d="M5 4.500h9.500v7H4.500v-2M14.500 6.500h1v3h-1M1.500 0v3M4.500 0v3M.5 3h5v2q-.5 1.500-2.500 1.500T.5 5zM3 6.500V10h1.500" stroke="#fff" fill="none" /><path d="M6.500 6h5v4h-5z" fill="#fff" /></svg>
      <svg width="17" height="15" viewBox="0 0 17 15" className="ml-2"><path d="M.5 5v5h2.500l3.500 3.500v-12L3 5zM8.500 5q1.500 2.500 0 5M11 3q3 4.500 0 9M13.500 1.500q4 6 0 12" stroke="#fff" fill="none" /></svg>
      <svg width="13" height="13" viewBox="0 0 13 13" className="ml-[10px]"><path d="M1 12Q1 1 12.500 1M4 12.500Q4 4.500 12.500 4.500M7 12.500Q7 8 12.500 7.500" stroke="#ddd" fill="none" strokeWidth="1.100" /><circle cx="11" cy="11" r="1.500" fill="#fff" /></svg>
      <svg width="23" height="13" viewBox="0 0 23 13" className="ml-[9px]"><rect x=".5" y=".5" width="22" height="12" fill="none" stroke="#fff" /><path d="M3 3.500h17M3 6.500h17" stroke="#fff" strokeDasharray="1 1" /><path d="M3 9.500h2M7 9.500h9M18 9.500h2" stroke="#fff" /></svg>
      <span className="ml-[13px] w-[72px] text-[12px] tracking-[-0.5px] whitespace-nowrap">8:46 PM</span>
      <svg width="17" height="16" viewBox="0 0 17 16"><path d="M.5 .5h16v12H11L8.500 15 6 12.500H.5z" fill="none" stroke="#fff" strokeWidth="1.100" /></svg>
      <div className="mr-[3px] ml-[20px] h-[30px] w-px bg-[#5a5a5a]" />
    </div>
  </div>
);

export default function App() {
  return (
    <div className={`flex h-[768px] w-[1366px] flex-col overflow-hidden ${UI}`}>
      <TabStrip />
      <Toolbar />
      <Bookmarks />
      <Page />
      <Taskbar />
    </div>
  );
}
